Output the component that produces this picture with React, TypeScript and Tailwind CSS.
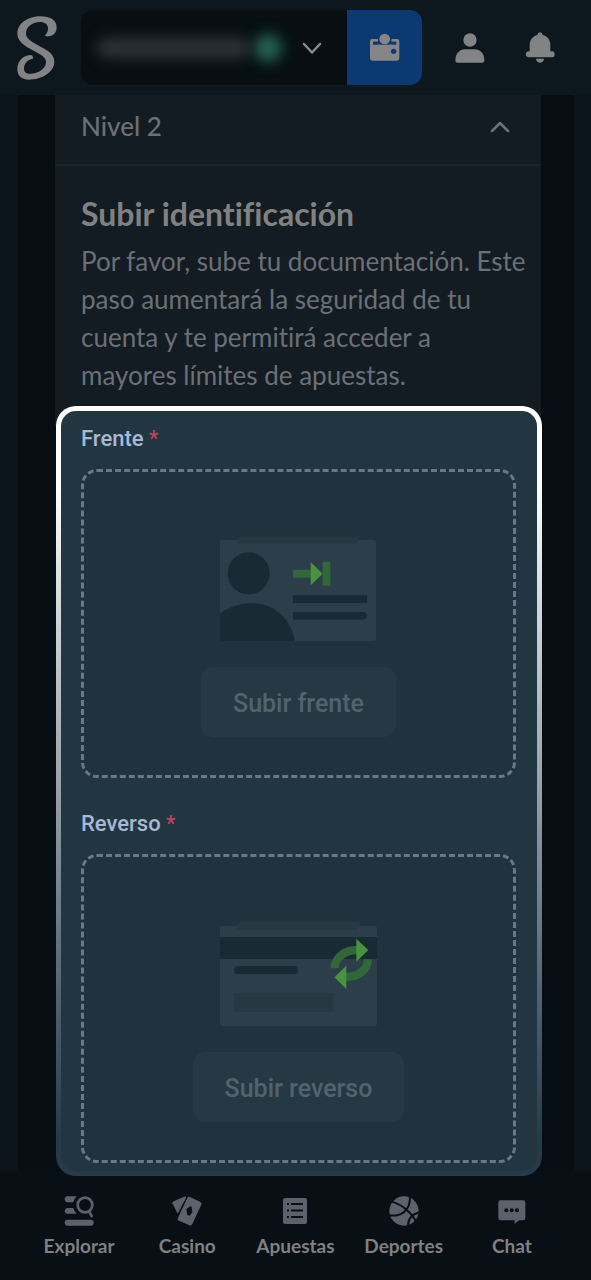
import type { ReactNode } from "react";

function Logo() {
  return (
    <svg viewBox="48 43 126 198" className="h-[66px] w-[42px]" fill="#818384">
      <path d="M134 104 C140 100 144 92 144 84 C144 70 134 64 120 64 C96 64 78 80 78 98 C78 114 92 122 114 134 C144 150 163 160 163 184 C163 214 126 237 86 237 C64 237 52 224 52 206 C52 180 70 163 94 163 Q101 167 98 175 C84 176 72 188 72 204 C72 214 78 219 90 219 C116 219 138 204 138 184 C138 172 126 164 104 152 C74 136 52 124 52 98 C52 68 84 47 122 47 C150 47 170 58 170 80 C170 96 160 107 146 107 Q138 108 134 104 Z" />
    </svg>
  );
}

function IconWallet() {
  return (
    <svg viewBox="207 99 93 87" className="h-[29px] w-[31px]">
      <path
        fill="#868686"
        d="M217 117 H234 V125 H221 V132 H287 V125 H274 V117 H291 Q298 117 298 124 V175 Q298 182 291 182 H217 Q210 182 210 175 V124 Q210 117 217 117 Z"
      />
      <path fill="#0b3a73" d="M219 125 H289 V134 H219 Z" />
      <circle cx="254" cy="118" r="20" fill="#0b3a73" />
      <path fill="#868686" d="M232 134 H276 V142 H232 Z" />
      <circle cx="254" cy="117" r="16" fill="#868686" />
      <circle cx="281" cy="154" r="8" fill="#0b3a73" />
    </svg>
  );
}

function IconUser() {
  return (
    <svg viewBox="464 97 90 90" className="h-[30px] w-[30px]" fill="#818384">
      <circle cx="509" cy="118" r="20" />
      <path d="M465 180 C465 158 478 146 494 146 H523 C540 146 552 158 552 180 Q552 186 546 186 H471 Q465 186 465 180 Z" />
    </svg>
  );
}

function IconBell() {
  return (
    <svg viewBox="672 94 90 93" className="h-[31px] w-[30px]" fill="#818384">
      <path d="M717 95 Q724 95 725 103 C741 107 748 119 748 133 V152 H754 Q761 153 761 162 Q760 170 753 170 H681 Q674 169 674 161 Q675 153 681 152 H686 V133 C686 119 694 107 709 103 Q710 95 717 95 Z" />
      <path d="M705 174 H729 C728 182 723 186 717 186 C711 186 706 182 705 174 Z" />
    </svg>
  );
}

function Chevron({ up }: { up?: boolean }) {
  return (
    <svg viewBox="0 0 20 12" className="h-3 w-5" fill="none" stroke={up ? "#6c7177" : "#898b8c"} strokeWidth="2.500" strokeLinecap="round" strokeLinejoin="round">
      <path d={up ? "M2 10 L10 2 L18 10" : "M2 2 L10 10.500 L18 2"} />
    </svg>
  );
}

function FrontArt() {
  return (
    <svg viewBox="90 45 471 318" className="h-[106px] w-[157px]">
      <rect x="90" y="60" width="468" height="303" rx="6" fill="#2b3e49" />
      <path fill="#253943" d="M141 72 Q143 49 158 49 H508 Q506 72 492 72 Z" />
      <circle cx="176" cy="160" r="63" fill="#182b35" />
      <path fill="#182b35" d="M90 280 C150 240 220 240 264 275 C290 296 308 326 315 363 H96 Q90 363 90 357 Z" />
      <path fill="#182b35" d="M309 226 H531 V249 H309 Z M309 276 H519 A11.500 11.500 0 0 1 519 299 H309 Z" />
      <path fill="#316837" d="M309 149 H364 V173 H309 Z M401 125 H418 Q421 125 421 128 V194 Q421 197 418 197 H401 Q398 197 398 194 V128 Q398 125 401 125 Z" />
      <path fill="#49923f" d="M362 126 L398 161 L362 196 Z" />
    </svg>
  );
}

function BackArt() {
  return (
    <svg viewBox="90 42 471 318" className="h-[106px] w-[157px]">
      <rect x="90" y="59" width="471" height="301" rx="7" fill="#2b3e49" />
      <path fill="#253943" d="M138 72 Q140 46 158 46 H511 Q509 72 494 72 Z" />
      <path fill="#182b35" d="M90 93 H561 V159 H90 Z" />
      <rect x="132" y="180" width="192" height="24" rx="12" fill="#182b35" />
      <path fill="#253943" d="M132 261 H430 V318 H132 Z" />
      <path fill="none" stroke="#316837" strokeWidth="25" d="M434 187 C434 155 464 132 501 132 M534 160 C534 192 504 213 468 213" />
      <path fill="#49923f" d="M499 98 L535 132 L499 167 Z M469 179 V249 L433 214 Z" />
    </svg>
  );
}

function UploadBox({ id, label, action, art }: { id: string; label: string; action: string; art: ReactNode }) {
  return (
    <div>
      <p id={id} className="font-['Roboto',sans-serif] text-[22px] leading-7 font-medium text-[#a9b8d3]">
        {label} <span className="font-normal text-[#d0405b]">*</span>
      </p>
      <div className="mt-4 flex h-[309px] flex-col items-center rounded-2xl border-[3px] border-dashed border-[#667987] bg-[#1f323d] pt-[63px]">
        {art}
        <button
          type="button"
          aria-describedby={id}
          className="mt-[26px] h-[70px] rounded-xl bg-[#253843] px-8 pt-1 font-['Roboto',sans-serif] text-[25px] font-medium text-[#526370]"
        >
          {action}
        </button>
      </div>
    </div>
  );
}

const tabs: { label: string; icon: ReactNode }[] = [
  {
    label: "Explorar",
    icon: (
      <svg viewBox="191 229 90 90" className="h-[30px] w-[30px]" fill="#5c626c">
        <path d="M201 230 H230 Q221 237 219 248 H201 Q193 247 193 239 Q193 231 201 230 Z M201 265 H219 Q221 275 229 282 H201 Q193 281 193 273 Q194 266 201 265 Z" />
        <rect x="193" y="300" width="87" height="18" rx="9" />
        <g fill="none" stroke="#5c626c" strokeWidth="8" strokeLinecap="round">
          <circle cx="254" cy="256" r="22" />
          <path d="M266 275 L274 289" />
        </g>
      </svg>
    ),
  },
  {
    label: "Casino",
    icon: (
      <svg viewBox="517 229 90 90" className="h-[30px] w-[30px]" fill="#5c626c">
        <path d="M522 245 L553 231 Q558 230 560 233 L534 282 L518 251 Q518 247 522 245 Z" />
        <path fillRule="evenodd" d="M569 231 L601 246 Q607 249 605 255 L578 313 Q575 319 569 317 L538 303 Q532 300 535 294 L563 235 Q565 230 569 231 Z M560 269 L563 286 L570 288 L578 278 L576 261 L571 260 Z" />
      </svg>
    ),
  },
  {
    label: "Apuestas",
    icon: (
      <svg viewBox="0 0 30 30" className="h-[30px] w-[30px]">
        <rect x="3" y="2" width="24" height="26" rx="2" fill="#5c626c" />
        <path stroke="#080f15" strokeWidth="2" d="M7 8 H9 M11 8 H23 M7 14.500 H9 M11 14.500 H23 M7 21 H9 M11 21 H23" />
      </svg>
    ),
  },
  {
    label: "Deportes",
    icon: (
      <svg viewBox="268 229 90 90" className="h-[30px] w-[30px]">
        <circle cx="313" cy="274" r="44" fill="#5c626c" />
        <path
          fill="none"
          stroke="#080f15"
          strokeWidth="6"
          d="M277 246 C310 256 340 283 350 309 M330 229 C335 270 305 292 269 287 M325 320 C325 298 337 283 360 278"
        />
      </svg>
    ),
  },
  {
    label: "Chat",
    icon: (
      <svg viewBox="593 229 90 90" className="h-[30px] w-[30px]">
        <path fill="#5c626c" d="M604 242 H671 Q678 242 678 249 V295 Q678 302 671 302 H659 L646 313 V302 H604 Q597 302 597 295 V249 Q597 242 604 242 Z" />
        <g fill="#080f15">
          <circle cx="621" cy="272" r="6" />
          <circle cx="637" cy="272" r="6" />
          <circle cx="653" cy="272" r="6" />
        </g>
      </svg>
    ),
  },
];

export default function App() {
  return (
    <div className="flex min-h-screen flex-col bg-[#0b141a] font-['Lato',sans-serif] [font-variant-ligatures:none]">
      <header className="flex h-[95px] items-center bg-[#0d171e] pr-9 pl-4">
        <Logo />
        <div className="ml-[23px] flex h-[75px] min-w-0 flex-1 overflow-hidden rounded-xl bg-[#070f13]">
          <button type="button" aria-label="Saldo" className="flex min-w-0 flex-1 items-center pr-[25px] pl-4">
            <span className="h-5 flex-1 rounded-xl bg-[#2f3338] blur-[7px]" />
            <span className="mr-5 ml-1 h-7 w-7 rounded-full bg-[#246350] blur-[7px]" />
            <Chevron />
          </button>
          <button type="button" aria-label="Cartera" className="flex w-[75px] items-center justify-center bg-[#0b3a73]">
            <IconWallet />
          </button>
        </div>
        <button type="button" aria-label="Perfil" className="ml-[33px]">
          <IconUser />
        </button>
        <button type="button" aria-label="Notificaciones" className="ml-10">
          <IconBell />
        </button>
      </header>

      <main className="mr-[17px] ml-[18px] flex-1 bg-[#060e14] pr-8 pl-[37px]">
        <div className="mr-px bg-[#131c22] pb-5">
          <button
            type="button"
            className="flex h-[71px] w-full items-center justify-between border-b-2 border-[#19242b] pr-[31px] pb-1.5 pl-[26px] text-[26px] font-medium text-[#6b7077]"
          >
            Nivel 2
            <Chevron up />
          </button>
          <section className="h-[240px] pt-7 pr-3 pl-[26px]">
            <h2 className="text-[32px] leading-10 font-bold text-[#818181]">Subir identificación</h2>
            <p className="mt-2 text-[26px] leading-[38px] text-[#6b7077]">
              Por favor, sube tu documentación. Este paso aumentará la seguridad de tu cuenta y te permitirá acceder a mayores límites de apuestas.
            </p>
          </section>
        </div>
        <div className="relative z-10 -mt-5 -mb-1 ml-px rounded-[20px] bg-linear-to-b from-white from-10% via-[#7c8992] via-60% to-[#253b4a] to-95% p-[5px]">
          <div className="flex flex-col gap-8 rounded-[15px] bg-[#223642] pt-[14px] pr-[21px] pb-2 pl-5">
            <UploadBox id="frente" label="Frente" action="Subir frente" art={<FrontArt />} />
            <UploadBox id="reverso" label="Reverso" action="Subir reverso" art={<BackArt />} />
          </div>
        </div>
      </main>

      <nav className="grid grid-cols-5 bg-[#080f15] px-[25px] pt-6 pb-[22px]">
        {tabs.map((tab) => (
          <a key={tab.label} href="#" className="flex flex-col items-center gap-2 text-[19px] leading-6 font-bold text-[#7f8182]">
            {tab.icon}
            {tab.label}
          </a>
        ))}
      </nav>
    </div>
  );
}
